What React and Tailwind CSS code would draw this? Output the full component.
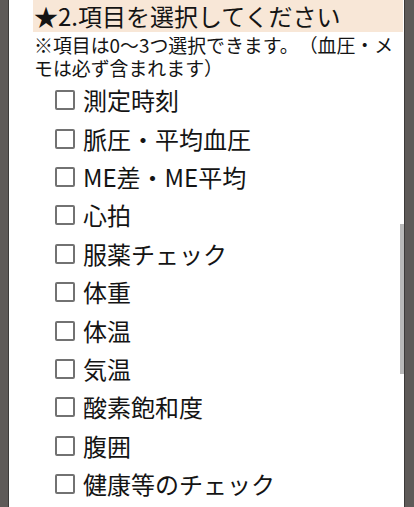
import React from 'react';

const items = [
  '測定時刻',
  '脈圧・平均血圧',
  'ME差・ME平均',
  '心拍',
  '服薬チェック',
  '体重',
  '体温',
  '気温',
  '酸素飽和度',
  '腹囲',
  '健康等のチェック',
];

const App = () => {
  return (
    <div
      className="flex h-[507px] w-[414px] overflow-hidden bg-white text-[#141414] [text-spacing-trim:space-all]"
      style={{ fontFamily: '"Noto Sans CJK JP", "Noto Sans", sans-serif' }}
    >
      {/* left frame */}
      <div className="w-[9px] shrink-0 border-r border-[#3c3a39] bg-[#5e5a58]" />

      {/* content */}
      <div className="relative flex-1 pl-[24px] pr-[1px]">
        <h2 className="bg-[#f8e7d7] pl-[1px] text-[24px] leading-[32px] font-normal">
          ★2.項目を選択してください
        </h2>
        <p className="mt-[1px] pl-[1px] text-[18.9px] leading-[23px]">
          ※項目は0〜3つ選択できます。（血圧・メモは必ず含まれます）
        </p>
        <ul className="mt-[2px]">
          {items.map((item) => (
            <li key={item} className="flex h-[38.4px] items-center pl-[22px]">
              <span className="mr-[8px] h-[20px] w-[20px] shrink-0 rounded-[2px] border-2 border-[#727272] bg-white" />
              <span className="text-[24px] leading-none">{item}</span>
            </li>
          ))}
        </ul>

        {/* scroll indicator */}
        <div className="absolute right-0 top-[224px] h-[150px] w-[4px] bg-[#b9b9b9]" />
      </div>

      {/* right frame */}
      <div className="w-[10px] shrink-0 border-l border-[#3c3a39] bg-[#5e5a58]" />
    </div>
  );
};

export default App;
